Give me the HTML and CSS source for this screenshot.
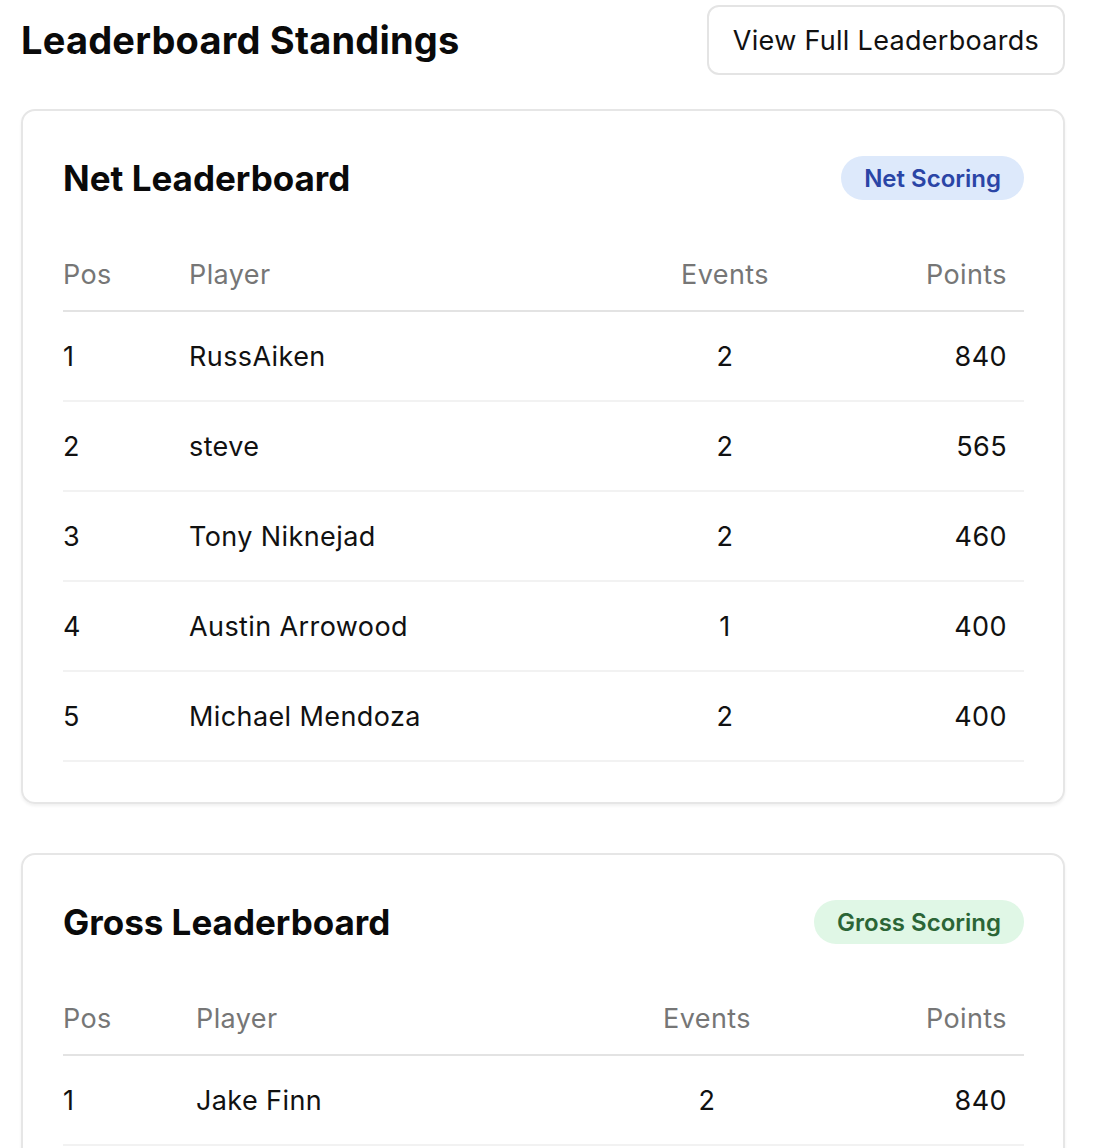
FILE: index.html
```html
<!DOCTYPE html>
<html lang="en">
<head>
<meta charset="utf-8">
<title>Leaderboard Standings</title>
<link rel="stylesheet" href="styles.css">
</head>
<body>
<div class="page">
  <header class="page-head">
    <h1 class="page-title">Leaderboard Standings</h1>
    <button class="btn-outline">View Full Leaderboards</button>
  </header>

  <section class="card">
    <div class="card-head">
      <h2 class="card-title">Net Leaderboard</h2>
      <span class="badge badge-net">Net Scoring</span>
    </div>
    <table class="board board-net">
      <colgroup>
        <col class="c-pos"><col class="c-player"><col class="c-events"><col class="c-points">
      </colgroup>
      <thead>
        <tr><th class="pos">Pos</th><th class="player">Player</th><th class="events">Events</th><th class="points">Points</th></tr>
      </thead>
      <tbody>
        <tr><td class="pos">1</td><td class="player">RussAiken</td><td class="events">2</td><td class="points">840</td></tr>
        <tr><td class="pos">2</td><td class="player">steve</td><td class="events">2</td><td class="points">565</td></tr>
        <tr><td class="pos">3</td><td class="player">Tony Niknejad</td><td class="events">2</td><td class="points">460</td></tr>
        <tr><td class="pos">4</td><td class="player">Austin Arrowood</td><td class="events">1</td><td class="points">400</td></tr>
        <tr><td class="pos">5</td><td class="player">Michael Mendoza</td><td class="events">2</td><td class="points">400</td></tr>
      </tbody>
    </table>
  </section>

  <section class="card">
    <div class="card-head">
      <h2 class="card-title">Gross Leaderboard</h2>
      <span class="badge badge-gross">Gross Scoring</span>
    </div>
    <table class="board board-gross">
      <colgroup>
        <col class="c-pos"><col class="c-player"><col class="c-events"><col class="c-points">
      </colgroup>
      <thead>
        <tr><th class="pos">Pos</th><th class="player">Player</th><th class="events">Events</th><th class="points">Points</th></tr>
      </thead>
      <tbody>
        <tr><td class="pos">1</td><td class="player">Jake Finn</td><td class="events">2</td><td class="points">840</td></tr>
        <tr><td class="pos">2</td><td class="player">steve</td><td class="events">2</td><td class="points">565</td></tr>
        <tr><td class="pos">3</td><td class="player">Tony Niknejad</td><td class="events">2</td><td class="points">460</td></tr>
      </tbody>
    </table>
  </section>
</div>
</body>
</html>
```

FILE: styles.css
```css
* { box-sizing: border-box; }

html, body {
  margin: 0;
  padding: 0;
  background: #ffffff;
}

body {
  font-family: Inter, "Noto Sans", "Liberation Sans", sans-serif;
  color: #111111;
}

.page {
  padding: 5px 31px 40px 21px;
}

.page-head {
  display: flex;
  align-items: center;
  justify-content: space-between;
  height: 70px;
  margin-bottom: 34px;
}

.page-title {
  margin: 0;
  font-size: 38px;
  font-weight: 700;
  letter-spacing: 0.2px;
  color: #0a0a0a;
}

.btn-outline {
  height: 70px;
  width: 358px;
  padding: 0 20px;
  border: 2px solid #e4e4e4;
  border-radius: 12px;
  background: #ffffff;
  font-family: inherit;
  font-size: 27px;
  letter-spacing: 0.3px;
  font-weight: 400;
  color: #111111;
}

.card {
  border: 2px solid #e6e6e6;
  border-radius: 14px;
  padding: 40px 39px 40px 40px;
  box-shadow: 0 2px 3px rgba(0, 0, 0, 0.06);
  margin-bottom: 49px;
}

.card-head {
  display: flex;
  align-items: center;
  justify-content: space-between;
  height: 54px;
  margin-bottom: 34px;
}

.card-title {
  margin: 0;
  font-size: 35px;
  font-weight: 700;
  letter-spacing: 0;
  color: #0a0a0a;
}

.badge {
  display: inline-flex;
  align-items: center;
  height: 44px;
  padding: 0 23px;
  border-radius: 22px;
  font-size: 24px;
  font-weight: 600;
}

.badge-net {
  background: #dde9fb;
  color: #2a45a6;
}

.badge-gross {
  background: #e0f7e6;
  color: #2b6536;
}

.board {
  width: 100%;
  border-collapse: collapse;
  table-layout: fixed;
  font-size: 27px;
  letter-spacing: 0.4px;
}

.board th,
.board td {
  padding: 0 17px 0 0;
  text-align: left;
  vertical-align: middle;
  white-space: nowrap;
}

.board th {
  height: 72px;
  font-weight: 400;
  color: #767676;
  border-bottom: 2px solid #e3e3e3;
}

.board td {
  height: 90px;
  color: #111111;
  border-bottom: 2px solid #f2f2f2;
}

.board .events { text-align: center; }
.board .points { text-align: right; }

.board-net .c-pos { width: 126px; }
.board-net .c-player { width: 414px; }
.board-net .c-events { width: 261px; }
.board-net .c-points { width: 160px; }

.board-gross .c-pos { width: 133px; }
.board-gross .c-player { width: 371px; }
.board-gross .c-events { width: 297px; }
.board-gross .c-points { width: 160px; }
```
